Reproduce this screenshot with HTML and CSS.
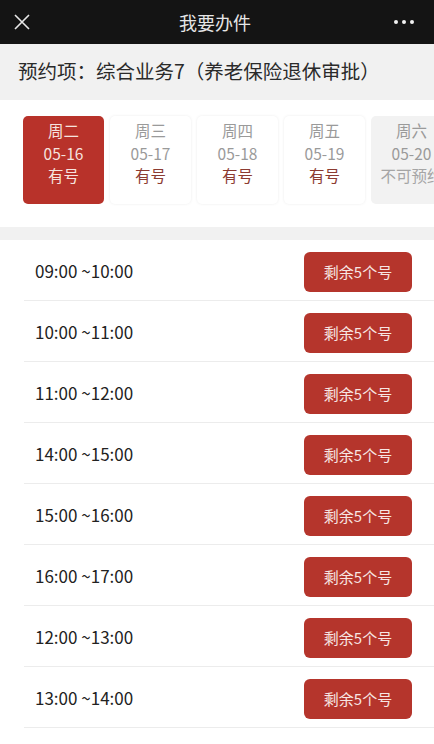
FILE: index.html
```html
<!DOCTYPE html>
<html lang="zh">
<head>
  <meta charset="UTF-8">
  <title>我要办件</title>
  <link rel="stylesheet" href="styles.css">
</head>
<body>

  <div class="topbar">
    <svg class="close-icon" width="16" height="16" viewBox="0 0 16 16">
      <path d="M1 1 L15 15 M15 1 L1 15" stroke="#e8e8e8" stroke-width="1.6" fill="none"/>
    </svg>
    <span class="topbar-title">我要办件</span>
    <span class="more"><i></i><i></i><i></i></span>
  </div>

  <div class="subject">预约项：综合业务7（养老保险退休审批）</div>

  <!-- 日期选择 -->
  <div class="days">
    <div class="day active">
      <div>周二</div>
      <div>05-16</div>
      <div class="state">有号</div>
    </div>
    <div class="day">
      <div>周三</div>
      <div>05-17</div>
      <div class="state">有号</div>
    </div>
    <div class="day">
      <div>周四</div>
      <div>05-18</div>
      <div class="state">有号</div>
    </div>
    <div class="day">
      <div>周五</div>
      <div>05-19</div>
      <div class="state">有号</div>
    </div>
    <div class="day off">
      <div>周六</div>
      <div>05-20</div>
      <div class="state">不可预约</div>
    </div>
  </div>

  <div class="gap"></div>

  <!-- 时间段 -->
  <ul class="slots">
    <li><span class="time">09:00 ~10:00</span><button class="slot-btn">剩余5个号</button></li>
    <li><span class="time">10:00 ~11:00</span><button class="slot-btn">剩余5个号</button></li>
    <li><span class="time">11:00 ~12:00</span><button class="slot-btn">剩余5个号</button></li>
    <li><span class="time">14:00 ~15:00</span><button class="slot-btn">剩余5个号</button></li>
    <li><span class="time">15:00 ~16:00</span><button class="slot-btn">剩余5个号</button></li>
    <li><span class="time">16:00 ~17:00</span><button class="slot-btn">剩余5个号</button></li>
    <li><span class="time">12:00 ~13:00</span><button class="slot-btn">剩余5个号</button></li>
    <li><span class="time">13:00 ~14:00</span><button class="slot-btn">剩余5个号</button></li>
  </ul>

</body>
</html>
```

FILE: styles.css
```css
body {
  margin: 0;
  font-family: "Noto Sans CJK SC", "Noto Sans", sans-serif;
  background-color: #fff;
  color: #222;
  overflow: hidden;
}

.topbar {
  height: 44px;
  background-color: #141414;
  display: flex;
  align-items: center;
  justify-content: space-between;
  padding: 0 20px 0 14px;
}

.close-icon {
  display: block;
}

.topbar-title {
  color: #e6e6e6;
  font-size: 18px;
  margin-left: 6px;
}

.more {
  display: flex;
  gap: 4px;
}

.more i {
  width: 4px;
  height: 4px;
  border-radius: 50%;
  background-color: #f2f2f2;
}

.subject {
  background-color: #f1f1f1;
  height: 56px;
  line-height: 54px;
  padding-left: 18px;
  font-size: 19.5px;
  color: #2a2a2a;
  white-space: nowrap;
}

.days {
  display: flex;
  gap: 6px;
  padding: 16px 0 23px 23px;
  overflow: hidden;
}

.day {
  flex: 0 0 81px;
  height: 88px;
  box-sizing: border-box;
  padding-top: 3px;
  border-radius: 5px;
  background-color: #fff;
  box-shadow: 0 0 3px rgba(0, 0, 0, 0.08);
  text-align: center;
  font-size: 15.5px;
  line-height: 22.5px;
  color: #9a9a9a;
  white-space: nowrap;
}

.day .state {
  color: #8c3b31;
}

.day.active {
  background-color: #b8322a;
  color: #f6e3df;
  box-shadow: none;
}

.day.active .state {
  color: #f6e3df;
}

.day.off {
  background-color: #f2f2f2;
  box-shadow: none;
}

.day.off .state {
  color: #a5a5a5;
}

.gap {
  height: 13px;
  background-color: #f1f1f1;
}

.slots {
  list-style: none;
  margin: 0;
  padding: 0 0 0 24px;
}

.slots li {
  height: 60px;
  border-bottom: 1px solid #ececec;
  display: flex;
  align-items: center;
  justify-content: space-between;
  padding: 0 22px 0 11px;
}

.time {
  font-size: 17px;
  color: #222;
}

.slot-btn {
  width: 108px;
  height: 40px;
  margin-top: 3px;
  border: none;
  border-radius: 6px;
  background-color: #b5352c;
  color: #f7e6e3;
  font-family: inherit;
  font-size: 15px;
  cursor: pointer;
}
```
